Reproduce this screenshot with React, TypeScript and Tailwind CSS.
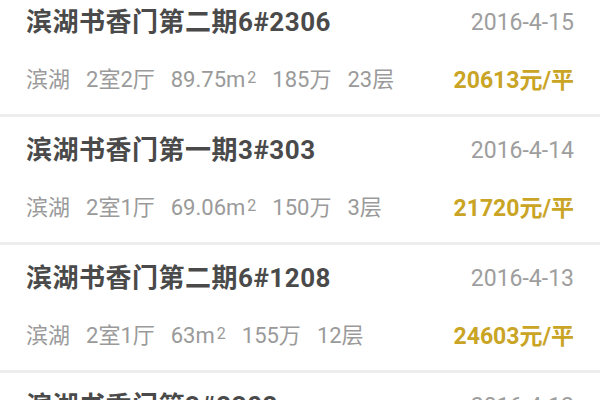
import { FC } from 'react';

interface Deal {
  title: string;
  date: string;
  area: string;
  layout: string;
  size: string;
  total: string;
  floor: string;
  price: string;
}

const deals: Deal[] = [
  { title: '滨湖书香门第二期6#2306', date: '2016-4-15', area: '滨湖', layout: '2室2厅', size: '89.75', total: '185万', floor: '23层', price: '20613元/平' },
  { title: '滨湖书香门第一期3#303', date: '2016-4-14', area: '滨湖', layout: '2室1厅', size: '69.06', total: '150万', floor: '3层', price: '21720元/平' },
  { title: '滨湖书香门第二期6#1208', date: '2016-4-13', area: '滨湖', layout: '2室1厅', size: '63', total: '155万', floor: '12层', price: '24603元/平' },
  { title: '滨湖书香门第3#2302', date: '2016-4-12', area: '滨湖', layout: '3室2厅', size: '118.4', total: '260万', floor: '23层', price: '21959元/平' },
];

const DealRow: FC<{ deal: Deal }> = ({ deal }) => (
  <div className="h-[125px] bg-white px-[26px] pt-[17px] flex flex-col">
    <div className="flex items-center justify-between h-[32px]">
      <span className="text-[26px] font-bold text-[#4a4a4a] leading-none tracking-[0.5px]">{deal.title}</span>
      <span className="text-[23px] text-[#9e9e9e] leading-none">{deal.date}</span>
    </div>
    <div className="flex items-center justify-between mt-[26px] h-[32px]">
      <div className="flex items-center gap-[16px] text-[22px] text-[#9a9a9a] leading-none">
        <span>{deal.area}</span>
        <span>{deal.layout}</span>
        <span>
          {deal.size}m<sup className="text-[16px] relative -top-[4px] ml-[2px]">2</sup>
        </span>
        <span>{deal.total}</span>
        <span>{deal.floor}</span>
      </div>
      <span className="text-[23px] font-bold text-[#c9a425] leading-none">{deal.price}</span>
    </div>
  </div>
);

export default function App() {
  return (
    <div
      className="w-[600px] h-[400px] overflow-hidden bg-[#ededed]"
      style={{ fontFamily: 'Roboto, "Noto Sans CJK SC", sans-serif' }}
    >
      <div className="flex flex-col gap-[3px] -mt-[11px]">
        {deals.map((d) => (
          <DealRow key={d.title} deal={d} />
        ))}
      </div>
    </div>
  );
}
